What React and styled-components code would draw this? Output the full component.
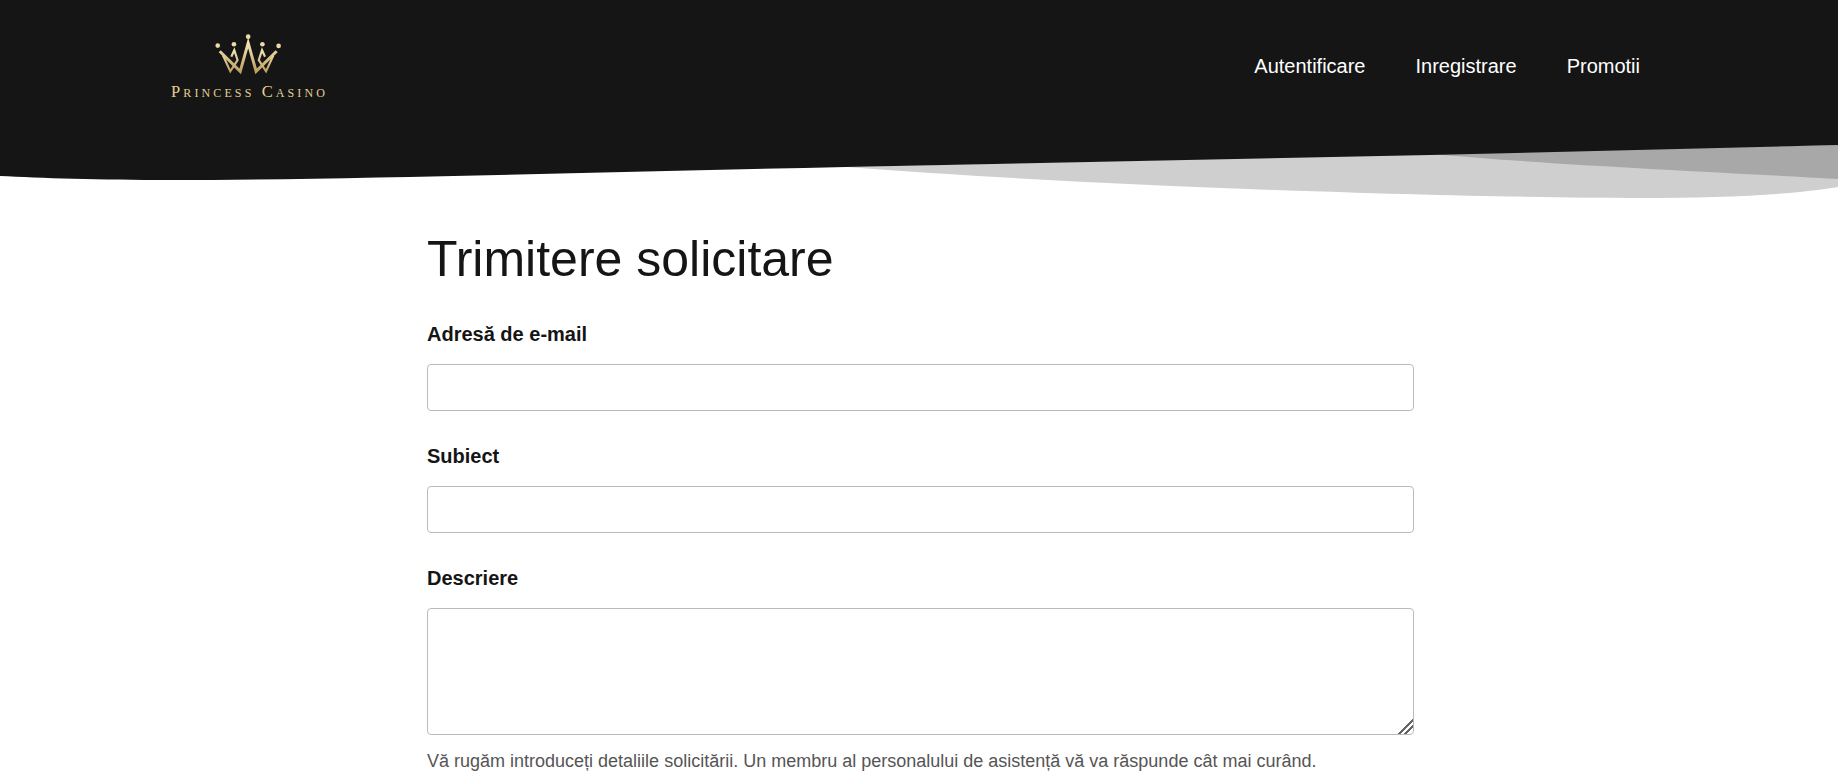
import React from "react";
import styled, { createGlobalStyle } from "styled-components";

const Global = createGlobalStyle`
  html, body {
    margin: 0;
    padding: 0;
    background: #fff;
    overflow: hidden;
    height: 781px;
    font-family: "Liberation Sans", Arial, sans-serif;
  }
  * { box-sizing: border-box; }
`;

const Page = styled.div`
  width: 1838px;
  height: 781px;
  overflow: hidden;
`;

const Header = styled.header`
  background: #151515;
  height: 130px;
  padding: 0 198px 0 170px;
  display: flex;
  justify-content: space-between;
  align-items: flex-start;
`;

const LogoLink = styled.a`
  display: flex;
  flex-direction: column;
  align-items: center;
  padding-top: 33px;
  width: 156px;
`;

const LogoName = styled.span`
  font-family: "Liberation Serif", "Times New Roman", serif;
  font-variant: small-caps;
  font-size: 16.5px;
  line-height: 16px;
  letter-spacing: 3.1px;
  color: #e6cf95;
  white-space: nowrap;
  margin: 8px 0 0 3px;
`;

const Nav = styled.nav`
  display: flex;
  gap: 50px;
  padding-top: 55px;
`;

const NavLink = styled.a`
  color: #fff;
  font-size: 20px;
  line-height: 23px;
`;

const Wave = styled.svg`
  display: block;
  width: 1838px;
  height: 70px;
`;

const Main = styled.main`
  width: 987px;
  margin: 0 0 0 427px;
`;

const Title = styled.h1`
  font-size: 50px;
  font-weight: 400;
  line-height: 60px;
  color: #151515;
  margin: 29px 0 33px;
`;

const Field = styled.div`
  margin-bottom: 33px;
`;

const Label = styled.label`
  display: block;
  font-size: 20px;
  font-weight: 700;
  line-height: 24px;
  color: #151515;
  margin-bottom: 18px;
`;

const TextInput = styled.input`
  display: block;
  width: 100%;
  height: 47px;
  border: 1px solid #bbb;
  border-radius: 4px;
  background: #fff;
`;

const TextArea = styled.textarea`
  display: block;
  width: 100%;
  height: 127px;
  border: 1px solid #bbb;
  border-radius: 4px;
  background: #fff;
  resize: vertical;

  &::-webkit-resizer {
    background: linear-gradient(
      135deg,
      transparent 0 48%,
      #666 48% 57%,
      transparent 57% 70%,
      #666 70% 79%,
      transparent 79%
    );
  }
`;

const Help = styled.p`
  font-size: 18px;
  line-height: 24px;
  color: #555;
  margin: 14px 0 0;
`;

const Crown = () => (
  <svg width="67" height="43" viewBox="195 40 200 130" fill="none">
    <defs>
      <linearGradient id="gold" x1="0" y1="0" x2="0" y2="1">
        <stop offset="0" stopColor="#f3e4b4" />
        <stop offset="1" stopColor="#bda062" />
      </linearGradient>
    </defs>
    <g fill="#ecdaa8">
      <circle cx="202" cy="78" r="7" />
      <circle cx="251" cy="74" r="7" />
      <circle cx="294" cy="51" r="7" />
      <circle cx="337" cy="74" r="7" />
      <circle cx="386" cy="79" r="7" />
    </g>
    <path d="M208 95 L270 156 L294 70 L318 156 L380 95" stroke="url(#gold)" strokeWidth="9" />
    <path
      d="M218 108 L240 156 L262 122 L252 92 L243 112 M370 108 L348 156 L326 122 L336 92 L345 112"
      stroke="url(#gold)"
      strokeWidth="6.5"
    />
  </svg>
);

export default function App() {
  return (
    <Page>
      <Global />
      <Header>
        <LogoLink>
          <Crown />
          <LogoName>Princess Casino</LogoName>
        </LogoLink>
        <Nav>
          <NavLink>Autentificare</NavLink>
          <NavLink>Inregistrare</NavLink>
          <NavLink>Promotii</NavLink>
        </Nav>
      </Header>
      <Wave viewBox="0 130 1838 70" preserveAspectRatio="none">
        <path d="M846 167 C1120 188 1480 198 1640 198 C1720 198 1790 195 1838 187 L1838 145 Z" fill="#cfcfcf" />
        <path d="M1420 153 C1550 165 1720 172 1838 179 L1838 145 Z" fill="#a8a8a8" />
        <path d="M0 130 L1838 130 L1838 145 L1430 155 L846 167 C600 172 350 180 170 180 C100 180 40 178 0 176 Z" fill="#151515" />
      </Wave>
      <Main>
        <Title>Trimitere solicitare</Title>
        <Field>
          <Label>Adresă de e-mail</Label>
          <TextInput type="text" />
        </Field>
        <Field>
          <Label>Subiect</Label>
          <TextInput type="text" />
        </Field>
        <Field>
          <Label>Descriere</Label>
          <TextArea />
          <Help>Vă rugăm introduceți detaliile solicitării. Un membru al personalului de asistență vă va răspunde cât mai curând.</Help>
        </Field>
      </Main>
    </Page>
  );
}
